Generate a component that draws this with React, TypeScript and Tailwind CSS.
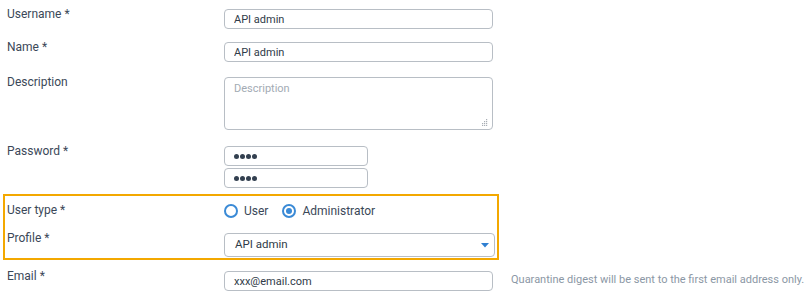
import React from "react";

const labelCls = "w-[217px] shrink-0 -mt-[2px] leading-[14px] text-[12px] text-[#3b4858]";
const inputCls =
  "h-[20px] border border-[#b8bec5] rounded-[4px] bg-white px-[9px] text-[11px] text-[#2f3b48] outline-none font-['Roboto']";

function Radio({ checked, label }: { checked: boolean; label: string }) {
  return (
    <label className="flex items-center gap-[6px]">
      <span className="w-[14px] h-[14px] rounded-full border-2 border-[#3a8ad6] flex items-center justify-center">
        {checked && <span className="w-[6px] h-[6px] rounded-full bg-[#3a8ad6]" />}
      </span>
      <span className="text-[12px] leading-[16px] text-[#3b4858]">{label}</span>
    </label>
  );
}

export default function App() {
  return (
    <div className="w-[809px] h-[298px] bg-white font-['Roboto',sans-serif] pt-[9px] overflow-hidden">
      {/* Username */}
      <div className="flex items-start pl-[7px]">
        <div className={labelCls}>Username *</div>
        <input className={`${inputCls} w-[269px]`} defaultValue="API admin" readOnly />
      </div>
      {/* Name */}
      <div className="flex items-start pl-[7px] mt-[13px]">
        <div className={labelCls}>Name *</div>
        <input className={`${inputCls} w-[269px]`} defaultValue="API admin" readOnly />
      </div>
      {/* Description */}
      <div className="flex items-start pl-[7px] mt-[15px]">
        <div className={labelCls}>Description</div>
        <div className="relative w-[269px] h-[53px] border border-[#b8bec5] rounded-[4px] px-[9px] pt-[4px]">
          <div className="text-[11px] leading-[14px] text-[#a3abb4]">Description</div>
          <svg className="absolute right-[4px] bottom-[3px]" width="7" height="7" viewBox="0 0 7 7">
            <rect x="5" y="0" width="1.2" height="1.2" fill="#a8aeb5" />
            <rect x="3" y="2" width="1.2" height="1.2" fill="#a8aeb5" />
            <rect x="5" y="2" width="1.2" height="1.2" fill="#a8aeb5" />
            <rect x="1" y="4" width="1.2" height="1.2" fill="#a8aeb5" />
            <rect x="3" y="4" width="1.2" height="1.2" fill="#a8aeb5" />
            <rect x="5" y="4" width="1.2" height="1.2" fill="#a8aeb5" />
            <rect x="1" y="6" width="1.2" height="1" fill="#a8aeb5" />
            <rect x="3" y="6" width="1.2" height="1" fill="#a8aeb5" />
            <rect x="5" y="6" width="1.2" height="1" fill="#a8aeb5" />
          </svg>
        </div>
      </div>
      {/* Password */}
      <div className="flex items-start pl-[7px] mt-[16px]">
        <div className={labelCls}>Password *</div>
        <div className="flex flex-col gap-[2px]">
          {[0, 1].map((i) => (
            <div
              key={i}
              className="h-[20px] w-[144px] border border-[#b8bec5] rounded-[4px] px-[9px] flex items-center gap-[1px]"
            >
              {[0, 1, 2, 3].map((d) => (
                <span key={d} className="w-[5px] h-[5px] rounded-full bg-[#334050]" />
              ))}
            </div>
          ))}
        </div>
      </div>
      {/* Highlight box */}
      <div className="ml-[3px] mt-[6px] w-[496px] border-2 border-[#f3a800] pt-[7px] pb-[1px] pl-[2px]">
        <div className="flex items-center h-[16px]">
          <div className="w-[217px] shrink-0 -mt-[2px] text-[12px] leading-[14px] text-[#3b4858]">User type *</div>
          <div className="flex items-center gap-[14px]">
            <Radio checked={false} label="User" />
            <Radio checked label="Administrator" />
          </div>
        </div>
        <div className="flex items-start mt-[14px]">
          <div className={labelCls}>Profile *</div>
          <div className="relative h-[24px] w-[271px] border border-[#b8bec5] rounded-[4px] px-[10px] flex items-center text-[11.5px] text-[#2f3b48]">
            API admin
            <svg className="absolute right-[5px] top-[9px]" width="8" height="5" viewBox="0 0 8 5">
              <path d="M0 0 H8 L4 4.5 Z" fill="#2f7fd1" />
            </svg>
          </div>
        </div>
      </div>
      {/* Email */}
      <div className="flex items-start pl-[7px] mt-[11px]">
        <div className={labelCls}>Email *</div>
        <input className={`${inputCls} w-[269px]`} defaultValue="xxx@email.com" readOnly />
        <div className="ml-[18px] mt-[2px] text-[11px] leading-[14px] text-[#8b97a5] whitespace-nowrap">
          Quarantine digest will be sent to the first email address only.
        </div>
      </div>
    </div>
  );
}
